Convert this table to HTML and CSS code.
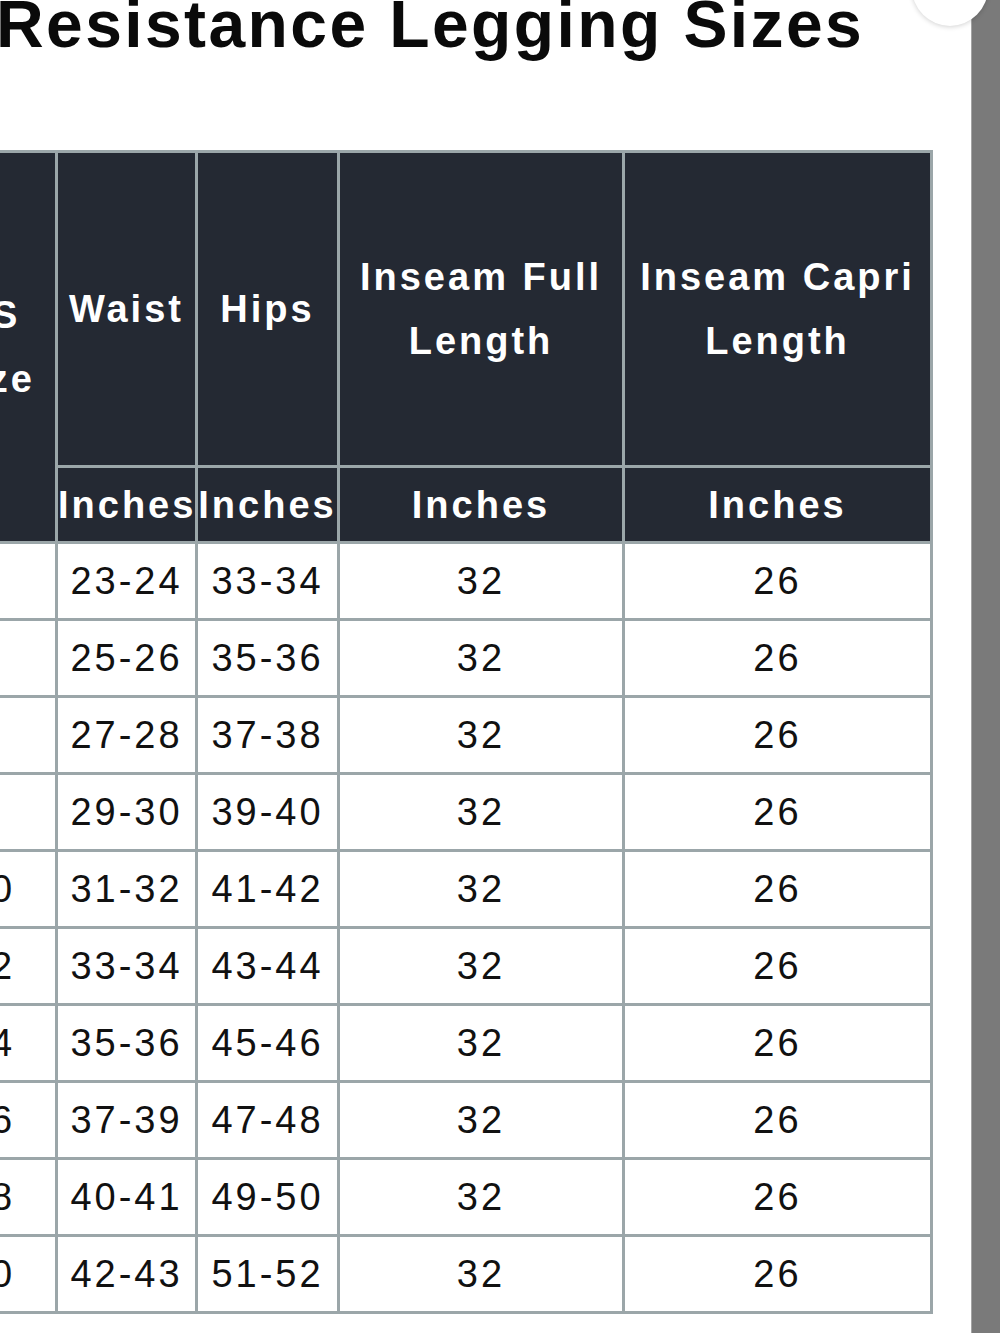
FILE: index.html
```html
<!DOCTYPE html>
<html lang="en">
<head>
<meta charset="utf-8">
<title>Resistance Legging Sizes</title>
<link rel="stylesheet" href="styles.css">
</head>
<body>
<div class="page">
  <main class="content">
    <h1 class="title">Resistance Legging Sizes</h1>
    <table class="sizes">
      <colgroup>
        <col class="c-size">
        <col class="c-waist">
        <col class="c-hips">
        <col class="c-full">
        <col class="c-capri">
      </colgroup>
      <thead>
        <tr class="head-main">
          <th rowspan="2">US Size</th>
          <th>Waist</th>
          <th>Hips</th>
          <th>Inseam Full Length</th>
          <th>Inseam Capri Length</th>
        </tr>
        <tr class="head-unit">
          <th>Inches</th>
          <th>Inches</th>
          <th>Inches</th>
          <th>Inches</th>
        </tr>
      </thead>
      <tbody>
        <tr><td>2</td><td>23-24</td><td>33-34</td><td>32</td><td>26</td></tr>
        <tr><td>4</td><td>25-26</td><td>35-36</td><td>32</td><td>26</td></tr>
        <tr><td>6</td><td>27-28</td><td>37-38</td><td>32</td><td>26</td></tr>
        <tr><td>8</td><td>29-30</td><td>39-40</td><td>32</td><td>26</td></tr>
        <tr><td>10</td><td>31-32</td><td>41-42</td><td>32</td><td>26</td></tr>
        <tr><td>12</td><td>33-34</td><td>43-44</td><td>32</td><td>26</td></tr>
        <tr><td>14</td><td>35-36</td><td>45-46</td><td>32</td><td>26</td></tr>
        <tr><td>16</td><td>37-39</td><td>47-48</td><td>32</td><td>26</td></tr>
        <tr><td>18</td><td>40-41</td><td>49-50</td><td>32</td><td>26</td></tr>
        <tr><td>20</td><td>42-43</td><td>51-52</td><td>32</td><td>26</td></tr>
      </tbody>
    </table>
  </main>
  <div class="rail"></div>
</div>
<div class="close-dot"></div>
</body>
</html>
```

FILE: styles.css
```css
html, body {
  margin: 0;
  padding: 0;
  background: #ffffff;
}

body {
  font-family: "Liberation Sans", Arial, Helvetica, sans-serif;
  color: #111111;
  overflow: hidden;
}

.page {
  display: flex;
  height: 1333px;
  overflow: hidden;
}

.content {
  flex: 1;
  min-width: 0;
  margin-left: -76px;
}

.title {
  margin: -9px 0 93px 72px;
  font-size: 66px;
  line-height: 66px;
  font-weight: 700;
  letter-spacing: 2.4px;
  color: #0a0a0a;
  white-space: nowrap;
}

.rail {
  flex: 0 0 28px;
  background: #7a7a7a;
  border-left: 1px solid #a4a4a4;
}

.close-dot {
  position: absolute;
  left: 912px;
  top: -50px;
  width: 76px;
  height: 76px;
  border-radius: 50%;
  background: #ffffff;
  box-shadow: 0 1px 5px rgba(0, 0, 0, 0.18);
}

.sizes {
  table-layout: fixed;
  width: 1009px;
  border-collapse: separate;
  border-spacing: 0;
  border-top: 3px solid #9ba6a9;
  border-left: 3px solid #9ba6a9;
  font-size: 38px;
  letter-spacing: 3px;
}

.c-size { width: 131px; }
.c-waist { width: 140px; }
.c-hips { width: 142px; }
.c-full { width: 285px; }
.c-capri { width: 308px; }

.sizes th,
.sizes td {
  padding: 0;
  text-align: center;
  vertical-align: middle;
  border-right: 3px solid #9ba6a9;
  border-bottom: 3px solid #9ba6a9;
  white-space: normal;
}

.sizes th {
  background: #242933;
  color: #ffffff;
  font-weight: 700;
  line-height: 64px;
}

.head-main th {
  height: 312px;
}

.head-unit th {
  height: 73px;
  white-space: nowrap;
  overflow: visible;
}

.sizes td {
  height: 74px;
  background: #ffffff;
  color: #111111;
  font-weight: 400;
  line-height: 40px;
}
```
